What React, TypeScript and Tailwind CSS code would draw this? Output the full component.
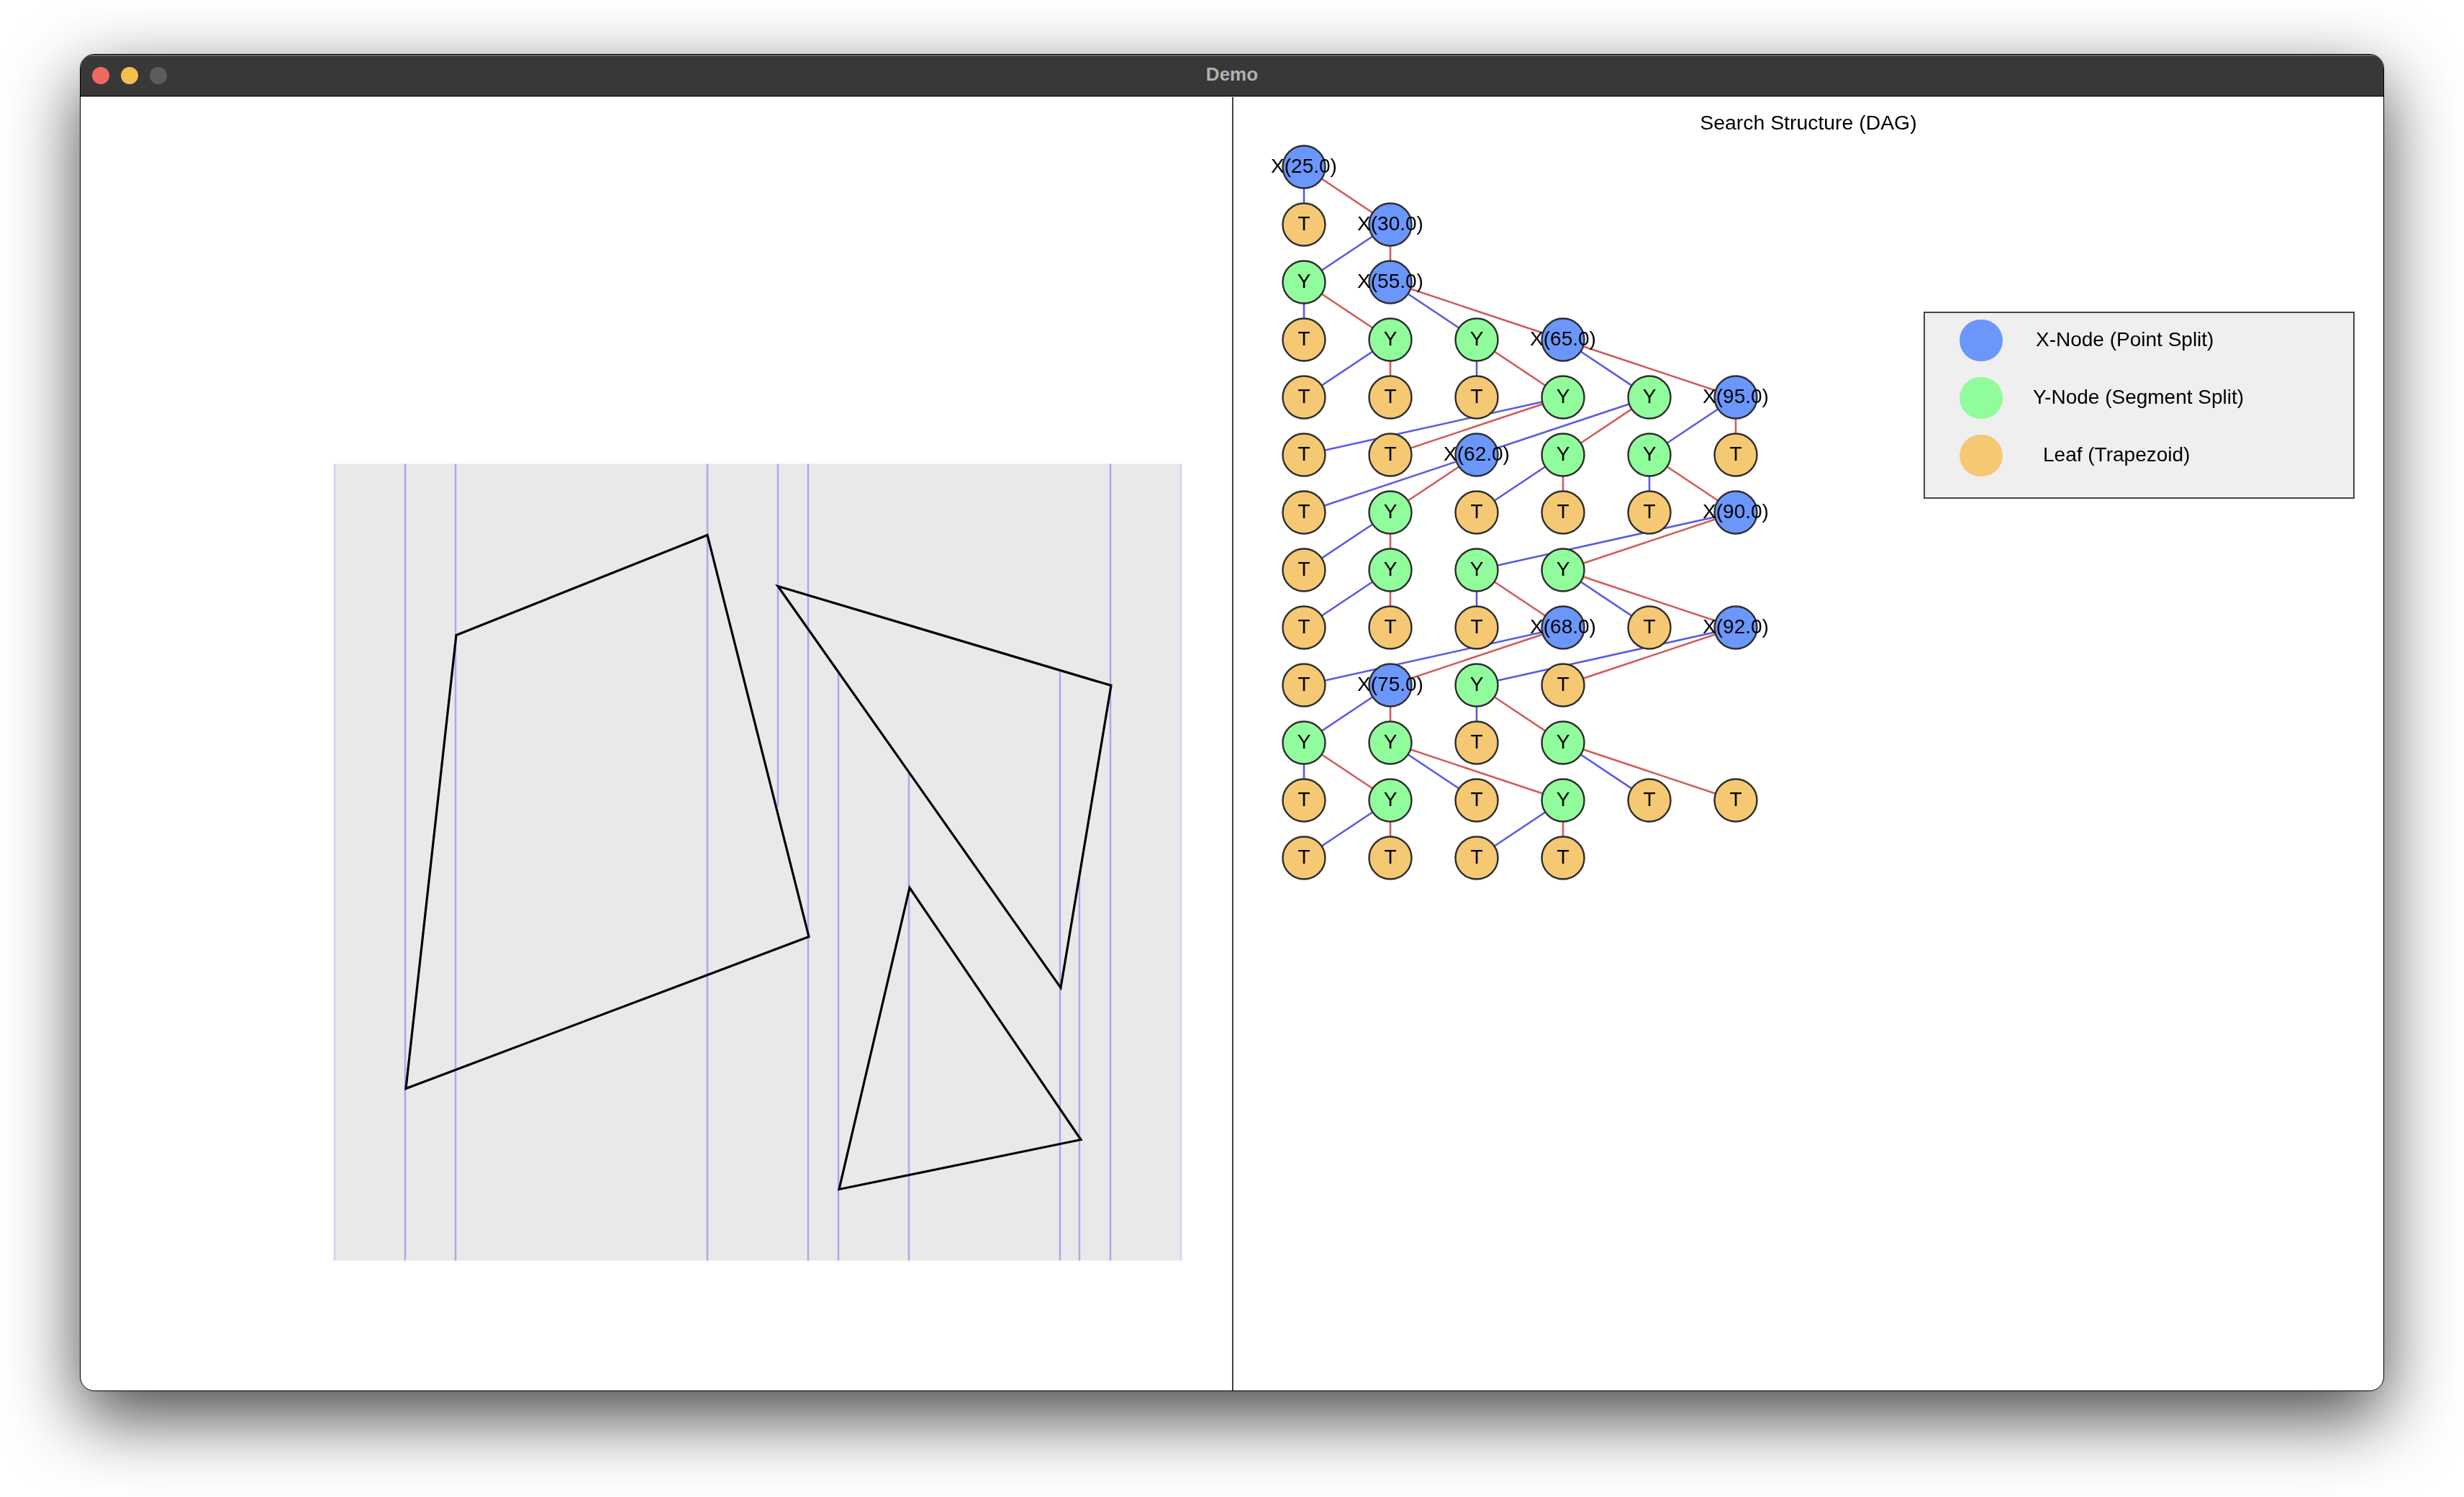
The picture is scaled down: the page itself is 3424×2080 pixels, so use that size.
import React from "react";

const COLS = [1812, 1932, 2052, 2172, 2292, 2412];
const rowY = (r: number) => 232 + r * 80;

const BLUE = "#6b96fb";
const GREEN = "#90fc9b";
const ORANGE = "#f5c873";

// each row of the search structure, a number is an X-node
const ROWS: string[][] = [
  ["25.0"],
  ["T", "30.0"],
  ["Y", "55.0"],
  ["T", "Y", "Y", "65.0"],
  ["T", "T", "T", "Y", "Y", "95.0"],
  ["T", "T", "62.0", "Y", "Y", "T"],
  ["T", "Y", "T", "T", "T", "90.0"],
  ["T", "Y", "Y", "Y"],
  ["T", "T", "T", "68.0", "T", "92.0"],
  ["T", "75.0", "Y", "T"],
  ["Y", "Y", "T", "Y"],
  ["T", "Y", "T", "Y", "T", "T"],
  ["T", "T", "T", "T"],
];

// [row, col, left child col, right child col], children sit on row + 1
const LINKS: [number, number, number, number][] = [
  [0, 0, 0, 1],
  [1, 1, 0, 1],
  [2, 0, 0, 1],
  [2, 1, 2, 3],
  [3, 1, 0, 1],
  [3, 2, 2, 3],
  [3, 3, 4, 5],
  [4, 3, 0, 1],
  [4, 4, 2, 3],
  [4, 5, 4, 5],
  [5, 2, 0, 1],
  [5, 3, 2, 3],
  [5, 4, 4, 5],
  [6, 1, 0, 1],
  [6, 5, 2, 3],
  [7, 1, 0, 1],
  [7, 2, 2, 3],
  [7, 3, 4, 5],
  [8, 3, 0, 1],
  [8, 5, 2, 3],
  [9, 1, 0, 1],
  [9, 2, 2, 3],
  [10, 0, 0, 1],
  [10, 1, 2, 3],
  [10, 3, 4, 5],
  [11, 1, 0, 1],
  [11, 3, 2, 3],
];

const SWEEPS: [number, number, number, string][] = [
  [465, 644, 1751, "#d2d2f6"],
  [563, 644, 1751, "#a9a9f2"],
  [633, 644, 1751, "#a9a9f2"],
  [983, 644, 1751, "#a9a9f2"],
  [1081, 644, 1120, "#a9a9f2"],
  [1123, 644, 1751, "#a9a9f2"],
  [1165, 934, 1751, "#a9a9f2"],
  [1263, 1073, 1751, "#a9a9f2"],
  [1473, 932, 1751, "#a9a9f2"],
  [1500, 1216, 1751, "#a9a9f2"],
  [1543, 644, 1751, "#a9a9f2"],
  [1641, 644, 1751, "#d2d2f6"],
];

const POLYGONS = [
  "634,882 983,743 1124,1301 564,1512",
  "1081,814 1544,952 1474,1372",
  "1264,1233 1502,1583 1166,1652",
];

const LEGEND = [
  { label: "X-Node (Point Split)", swatch: "bg-[#6b96fb]", gap: "ml-[46px]" },
  { label: "Y-Node (Segment Split)", swatch: "bg-[#90fc9b]", gap: "ml-[42px]" },
  { label: "Leaf (Trapezoid)", swatch: "bg-[#f5c873]", gap: "ml-[56px]" },
];

const nodeFill = (kind: string) => {
  if (kind === "T") return ORANGE;
  if (kind === "Y") return GREEN;
  return BLUE;
};

const Trapezoids = () => (
  <svg
    viewBox="112 135 1600 1796"
    className="w-[1600px] h-full blur-[0.6px]"
    fill="none"
  >
    <rect x="465" y="644" width="1176" height="1107" fill="#e9e9e9" />
    {SWEEPS.map(([x, y1, y2, color]) => (
      <line key={x} x1={x} x2={x} y1={y1} y2={y2} stroke={color} strokeWidth="2.5" />
    ))}
    {POLYGONS.map((points) => (
      <polygon key={points} points={points} stroke="#000" strokeWidth="3.2" />
    ))}
  </svg>
);

const SearchGraph = () => (
  <svg
    viewBox="1714 205 760 1040"
    className="w-[760px] h-[1040px] overflow-visible blur-[0.7px] font-['Liberation_Sans',sans-serif]"
  >
    {LINKS.map(([r, c, left, right]) => (
      <g key={`${r}-${c}`} strokeWidth="2.6">
        <line x1={COLS[c]} y1={rowY(r)} x2={COLS[left]} y2={rowY(r + 1)} stroke="#5a5ae2" />
        <line x1={COLS[c]} y1={rowY(r)} x2={COLS[right]} y2={rowY(r + 1)} stroke="#d25a5a" />
      </g>
    ))}
    {ROWS.map((row, r) =>
      row.map((kind, c) => (
        <g key={`${r}-${c}`}>
          <circle
            cx={COLS[c]}
            cy={rowY(r)}
            r="29.5"
            fill={nodeFill(kind)}
            stroke="#2e2e2e"
            strokeWidth="2.4"
          />
          <text
            x={COLS[c]}
            y={rowY(r) + 8}
            textAnchor="middle"
            fontSize="28"
            fill="#000"
          >
            {kind === "T" || kind === "Y" ? kind : `X(${kind})`}
          </text>
        </g>
      ))
    )}
  </svg>
);

export default function App() {
  return (
    <div className="h-[2080px] overflow-hidden bg-white pt-[75px] pl-[111px] font-['Liberation_Sans',sans-serif]">
      <div className="flex flex-col w-[3202px] h-[1858px] rounded-[20px] overflow-hidden border border-black bg-white shadow-[0_36px_100px_rgba(0,0,0,0.72)]">
        <header className="grid grid-cols-3 items-center h-[58px] shrink-0 bg-[#383838] border-b border-black shadow-[inset_0_2px_0_#666]">
          <div className="flex items-center gap-4 pl-4">
            <span className="w-6 h-6 rounded-full bg-[#ee6a5f]" />
            <span className="w-6 h-6 rounded-full bg-[#f5bf4f]" />
            <span className="w-6 h-6 rounded-full bg-[#5c5c5c]" />
          </div>
          <p className="pb-0.5 text-center text-[26px] font-bold text-[#b0b0b0]">Demo</p>
        </header>
        <main className="flex flex-1 min-h-0 border-t border-[#c4c4c4]">
          <section className="w-[1600px] shrink-0">
            <Trapezoids />
          </section>
          <section className="relative flex flex-col flex-1 border-l-2 border-[#444]">
            <h2 className="flex items-center justify-center h-[70px] text-[28.4px] font-normal text-black blur-[0.6px]">
              Search Structure (DAG)
            </h2>
            <SearchGraph />
            <aside className="absolute left-[959px] top-[298px] flex flex-col gap-1 w-[599px] h-[260px] border-2 border-[#444] bg-[#efefef]">
              {LEGEND.map((item) => (
                <div key={item.label} className="flex items-center h-[76px] pl-[48px] blur-[0.6px]">
                  <span className={`w-[60px] h-[58px] rounded-full ${item.swatch}`} />
                  <span className={`pb-[3px] text-[28px] text-black ${item.gap}`}>{item.label}</span>
                </div>
              ))}
            </aside>
          </section>
        </main>
      </div>
    </div>
  );
}
